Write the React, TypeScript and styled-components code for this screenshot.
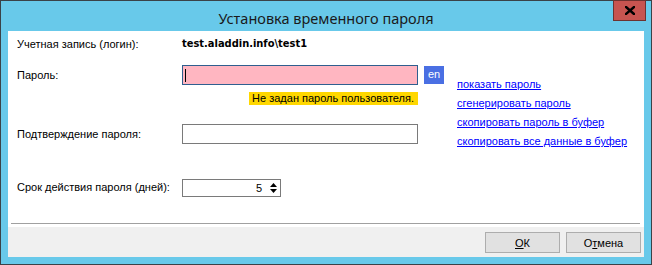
import React from "react";
import styled, { createGlobalStyle } from "styled-components";

const Global = createGlobalStyle`
  html, body { margin: 0; padding: 0; background: #ffffff; }
  body { font-family: "Liberation Sans", Arial, sans-serif; }
`;

const Window = styled.div`
  width: 652px;
  height: 265px;
  box-sizing: border-box;
  border: 1px solid #3a4248;
  background: #68c9ea;
  display: flex;
  flex-direction: column;
`;

const TitleBar = styled.div`
  height: 30px;
  display: grid;
  grid-template-columns: 1fr auto 1fr;
  align-items: start;
`;

const Title = styled.div`
  grid-column: 2;
  font-family: "Noto Sans", "Open Sans", sans-serif;
  font-size: 14.5px;
  line-height: 30px;
  padding-top: 2px;
  color: #1a1a1a;
  white-space: nowrap;
`;

const CloseButton = styled.div`
  grid-column: 3;
  justify-self: end;
  margin: -1px 5px 0 0;
  width: 33px;
  height: 21px;
  box-sizing: border-box;
  background: #c75450;
  border: 1px solid #6e3230;
  display: flex;
  align-items: center;
  justify-content: center;
`;

const Client = styled.div`
  flex: 1;
  margin: 0 7px 7px;
  background: #ffffff;
  display: flex;
  flex-direction: column;
`;

const Body = styled.div`
  flex: 1;
  padding-left: 9px;
  display: grid;
  grid-template-columns: 165px 236px 26px 1fr;
  grid-template-rows: 34px 20px 20px 39px 53px;
  font-size: 11px;
  color: #000;
`;

const Label = styled.div<{ $row: number; $align?: string }>`
  grid-column: 1;
  grid-row: ${(p) => p.$row};
  align-self: ${(p) => p.$align || "center"};
  line-height: ${(p) => (p.$row === 1 ? "26px" : "20px")};
  white-space: nowrap;
`;

const Login = styled.div`
  grid-column: 2 / 4;
  grid-row: 1;
  align-self: start;
  line-height: 26px;
  font-family: "DejaVu Sans Condensed", "Liberation Sans", sans-serif;
  font-weight: bold;
  font-size: 11px;
  white-space: nowrap;
`;

const Field = styled.div<{ $row: number; $invalid?: boolean }>`
  grid-column: 2;
  grid-row: ${(p) => p.$row};
  align-self: end;
  height: 20px;
  box-sizing: border-box;
  border: 1px solid ${(p) => (p.$invalid ? "#2f5f8f" : "#7a7a7a")};
  background: ${(p) => (p.$invalid ? "#ffb6c1" : "#ffffff")};
  display: flex;
  align-items: center;
  padding-left: 2px;
`;

const Caret = styled.span`
  width: 1px;
  height: 13px;
  background: #000;
`;

const LangButton = styled.div`
  grid-column: 3;
  grid-row: 2;
  justify-self: end;
  align-self: start;
  margin-top: 1px;
  width: 20px;
  height: 18px;
  background: #4a6fe3;
  color: #ffffff;
  font-size: 11px;
  line-height: 17px;
  text-align: center;
`;

const ErrorText = styled.div`
  grid-column: 2;
  grid-row: 3;
  justify-self: end;
  align-self: end;
  height: 13px;
  line-height: 13px;
  padding: 0 4px 0 3px;
  background: #ffd700;
  white-space: nowrap;
`;

const Spinner = styled.div`
  grid-column: 2;
  grid-row: 5;
  align-self: end;
  width: 99px;
  height: 18px;
  box-sizing: border-box;
  border: 1px solid #7a7a7a;
  display: flex;
  align-items: center;
`;

const SpinValue = styled.div`
  flex: 1;
  text-align: right;
  line-height: 16px;
  padding-right: 5px;
`;

const SpinArrows = styled.div`
  width: 13px;
  height: 16px;
  display: flex;
  flex-direction: column;
  align-items: center;
  justify-content: space-between;
  padding: 3px 0 3px;
  box-sizing: border-box;
`;

const Links = styled.div`
  grid-column: 4;
  grid-row: 1 / 6;
  padding: 44px 0 0 13px;
  display: flex;
  flex-direction: column;
  align-items: flex-start;
`;

const Link = styled.a`
  color: #0000ff;
  text-decoration: underline;
  line-height: 19px;
  white-space: nowrap;
  cursor: pointer;
`;

const Separator = styled.div`
  height: 1px;
  margin: 0 4px 3px 3px;
  background: #a0a0a0;
`;

const Footer = styled.div`
  height: 30px;
  background: #f0f0f0;
  display: flex;
  justify-content: flex-end;
  align-items: flex-start;
  gap: 6px;
  padding: 5px 3px 0 0;
  box-sizing: border-box;
`;

const Button = styled.button`
  width: 75px;
  height: 21px;
  margin: 0;
  padding: 0;
  border: 1px solid #adadad;
  background: #e1e1e1;
  font-family: "Liberation Sans", Arial, sans-serif;
  font-size: 11px;
  color: #000;
  & u { text-decoration: underline; }
`;

const Triangle = ({ up }: { up?: boolean }) => (
  <svg width="7" height="4" viewBox="0 0 7 4">
    <path d={up ? "M0 4 L3.5 0 L7 4 Z" : "M0 0 L3.5 4 L7 0 Z"} fill="#000" />
  </svg>
);

export default function App() {
  return (
    <>
      <Global />
      <Window>
        <TitleBar>
          <Title>Установка временного пароля</Title>
          <CloseButton>
            <svg width="10" height="9" viewBox="0 0 10 9">
              <path d="M1 1 L9 8 M9 1 L1 8" stroke="#000" strokeWidth="2.4" strokeLinecap="square" />
            </svg>
          </CloseButton>
        </TitleBar>
        <Client>
          <Body>
            <Label $row={1} $align="start">Учетная запись (логин):</Label>
            <Login>test.aladdin.info\test1</Login>

            <Label $row={2}>Пароль:</Label>
            <Field $row={2} $invalid>
              <Caret />
            </Field>
            <LangButton>en</LangButton>
            <ErrorText>Не задан пароль пользователя.</ErrorText>

            <Label $row={4} $align="end">Подтверждение пароля:</Label>
            <Field $row={4} />

            <Label $row={5} $align="end">Срок действия пароля (дней):</Label>
            <Spinner>
              <SpinValue>5</SpinValue>
              <SpinArrows>
                <Triangle up />
                <Triangle />
              </SpinArrows>
            </Spinner>

            <Links>
              <Link>показать пароль</Link>
              <Link>сгенерировать пароль</Link>
              <Link>скопировать пароль в буфер</Link>
              <Link>скопировать все данные в буфер</Link>
            </Links>
          </Body>
          <Separator />
          <Footer>
            <Button>
              <u>О</u>К
            </Button>
            <Button>
              О<u>т</u>мена
            </Button>
          </Footer>
        </Client>
      </Window>
    </>
  );
}
